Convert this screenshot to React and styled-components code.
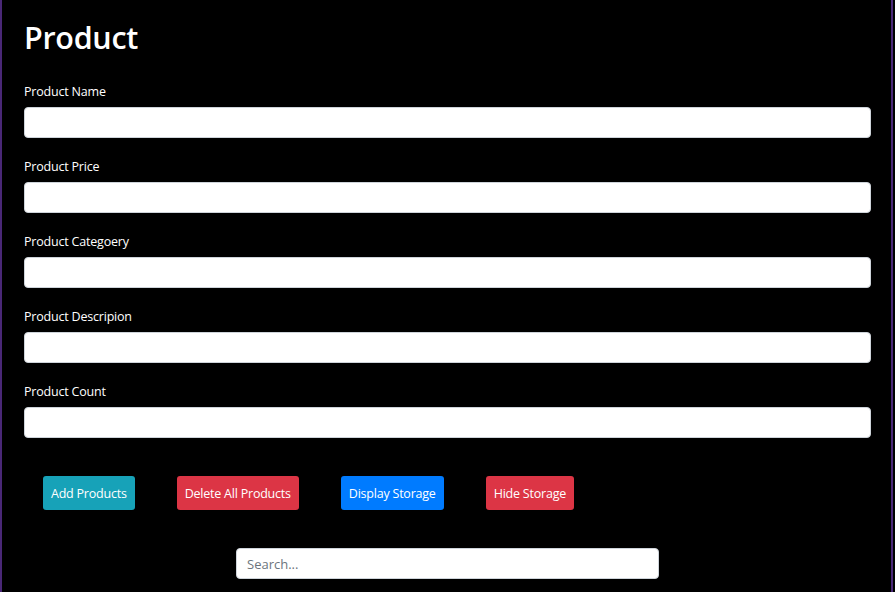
import React from 'react';
import styled, { createGlobalStyle } from 'styled-components';

const GlobalStyle = createGlobalStyle`
  html, body {
    margin: 0;
    background: #000;
  }
  body {
    font-family: "Open Sans", "Noto Sans", sans-serif;
  }
`;

const Page = styled.div`
  box-sizing: border-box;
  width: 893px;
  min-height: 592px;
  background: #000;
  border-left: 2px solid #4a2877;
  border-right: 2px solid #4a2877;
  padding: 18px 20px 12px 22px;
  color: #fff;
`;

const Title = styled.h1`
  margin: 0 0 26px 0;
  font-size: 30.5px;
  line-height: 38px;
  font-weight: 600;
  letter-spacing: -0.3px;
`;

const Field = styled.div`
  display: flex;
  flex-direction: column;
  margin-bottom: 19px;
`;

const Label = styled.label`
  font-size: 12.5px;
  line-height: 20px;
  margin-bottom: 5px;
  letter-spacing: -0.2px;
`;

const Input = styled.input`
  box-sizing: border-box;
  width: 100%;
  height: 31px;
  border: 1px solid #ced4da;
  border-radius: 4px;
  background: #fff;
  padding: 4px 10px;
  font-family: inherit;
  font-size: 13px;
  outline: none;
`;

const ButtonRow = styled.div`
  display: flex;
  gap: 42px;
  padding-left: 19px;
  margin-top: 38px;
`;

const colors = {
  info: '#17a2b8',
  danger: '#dc3545',
  primary: '#007bff',
};

const Button = styled.button`
  height: 34px;
  padding: 0 8px;
  border: none;
  border-radius: 3px;
  background: ${({ variant }) => colors[variant]};
  color: #fff;
  font-family: inherit;
  font-size: 12.5px;
  letter-spacing: -0.22px;
  cursor: pointer;
`;

const SearchWrap = styled.div`
  display: flex;
  justify-content: center;
  margin-top: 38px;
`;

const Search = styled(Input)`
  width: 423px;
  &::placeholder {
    color: #6c757d;
  }
`;

const fields = [
  'Product Name',
  'Product Price',
  'Product Categoery',
  'Product Descripion',
  'Product Count',
];

const App = () => {
  return (
    <>
      <GlobalStyle />
      <Page>
        <Title>Product</Title>
        {fields.map((label) => (
          <Field key={label}>
            <Label>{label}</Label>
            <Input type="text" />
          </Field>
        ))}
        <ButtonRow>
          <Button variant="info">Add Products</Button>
          <Button variant="danger">Delete All Products</Button>
          <Button variant="primary">Display Storage</Button>
          <Button variant="danger">Hide Storage</Button>
        </ButtonRow>
        <SearchWrap>
          <Search type="text" placeholder="Search..." />
        </SearchWrap>
      </Page>
    </>
  );
};

export default App;
